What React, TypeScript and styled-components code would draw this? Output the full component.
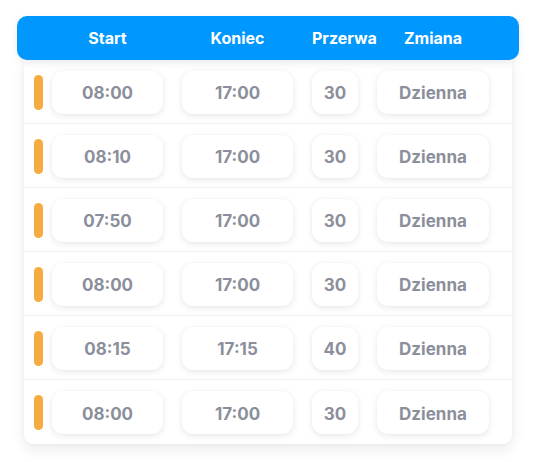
import React from "react";
import styled, { createGlobalStyle } from "styled-components";

const Global = createGlobalStyle`
  html, body { margin: 0; padding: 0; background: #ffffff; }
  body { font-family: "Inter", "Lato", sans-serif; }
`;

const Page = styled.div`
  width: 536px;
  height: 462px;
  padding: 16px 17px 0 17px;
  box-sizing: border-box;
  display: flex;
  flex-direction: column;
`;

const Header = styled.div`
  position: relative;
  z-index: 2;
  height: 44px;
  background: #0098ff;
  border-radius: 10px;
  box-shadow: 0 3px 8px rgba(0, 0, 0, 0.08);
  display: flex;
  align-items: center;
  gap: 19px;
  padding-left: 35px;
  box-sizing: border-box;
`;

const HeadCell = styled.div<{ $w: number }>`
  width: ${(p) => p.$w}px;
  flex: none;
  color: #ffffff;
  font-weight: 700;
  font-size: 16px;
  text-align: center;
  white-space: nowrap;
`;

const Card = styled.div`
  margin: 0 7px;
  background: #ffffff;
  border-radius: 0 0 9px 9px;
  box-shadow: 0 6px 14px rgba(0, 0, 0, 0.08), 0 0 4px rgba(0, 0, 0, 0.04);
  display: flex;
  flex-direction: column;
`;

const Row = styled.div<{ $last?: boolean }>`
  height: 64px;
  box-sizing: border-box;
  display: flex;
  align-items: center;
  gap: 19px;
  padding-left: 10px;
  border-bottom: ${(p) => (p.$last ? "none" : "1px solid #f0f0f1")};
`;

const Bar = styled.div`
  flex: none;
  width: 9px;
  height: 35px;
  border-radius: 5px;
  background: #f6ab41;
  margin-top: 1px;
  margin-right: -10px;
`;

const Pill = styled.div<{ $w: number }>`
  flex: none;
  width: ${(p) => p.$w}px;
  height: 43px;
  margin-top: 1px;
  padding-top: 2px;
  box-sizing: border-box;
  background: #ffffff;
  border-radius: 11px;
  box-shadow: 0 2px 7px rgba(0, 0, 0, 0.09), 0 0 2px rgba(0, 0, 0, 0.04);
  display: flex;
  align-items: center;
  justify-content: center;
  color: #8b8f9b;
  font-weight: 700;
  font-size: 17px;
`;

const widths = [111, 111, 46, 112];
const heads = ["Start", "Koniec", "Przerwa", "Zmiana"];

const rows = [
  ["08:00", "17:00", "30", "Dzienna"],
  ["08:10", "17:00", "30", "Dzienna"],
  ["07:50", "17:00", "30", "Dzienna"],
  ["08:00", "17:00", "30", "Dzienna"],
  ["08:15", "17:15", "40", "Dzienna"],
  ["08:00", "17:00", "30", "Dzienna"],
];

export default function App() {
  return (
    <>
      <Global />
      <Page>
        <Header>
          {heads.map((h, i) => (
            <HeadCell key={h} $w={widths[i]}>
              {h}
            </HeadCell>
          ))}
        </Header>
        <Card>
          {rows.map((r, i) => (
            <Row key={i} $last={i === rows.length - 1}>
              <Bar />
              {r.map((v, j) => (
                <Pill key={j} $w={widths[j]}>
                  {v}
                </Pill>
              ))}
            </Row>
          ))}
        </Card>
      </Page>
    </>
  );
}
